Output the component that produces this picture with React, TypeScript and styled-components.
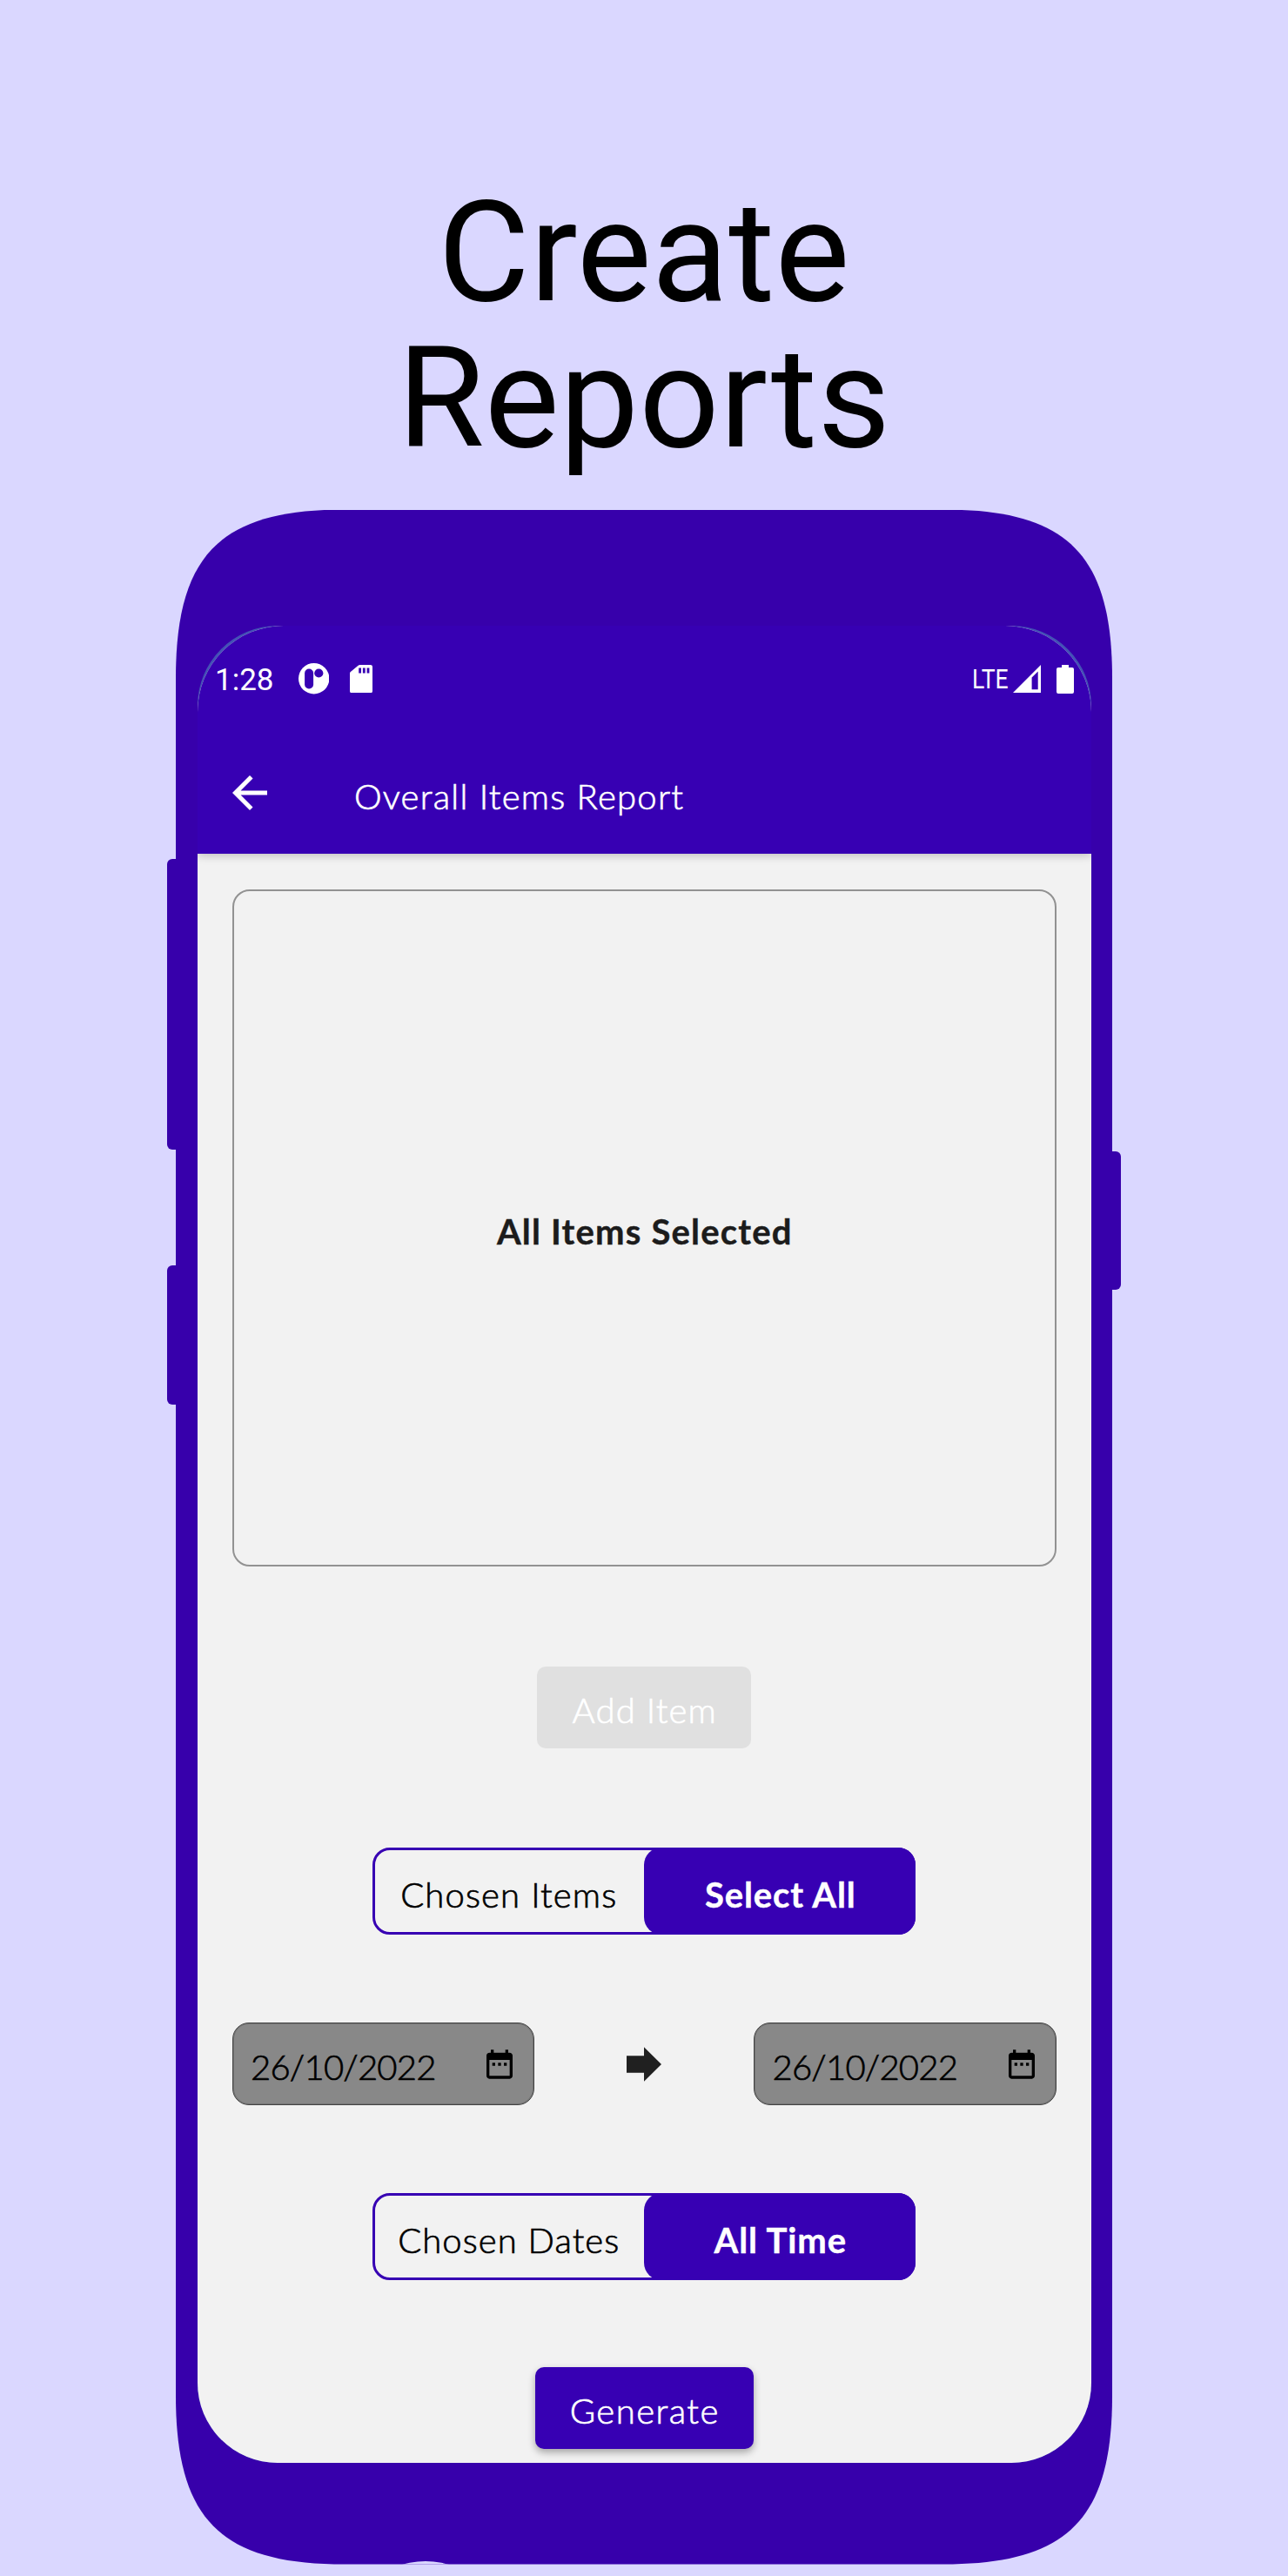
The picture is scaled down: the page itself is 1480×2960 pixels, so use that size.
import React from "react";
import styled, { createGlobalStyle } from "styled-components";

const PRIMARY = "#3700b3";
const BEZEL = "#3700ab";
const LAVENDER = "#dad7ff";
const SURFACE = "#f2f2f2";

const GlobalStyle = createGlobalStyle`
  *, *::before, *::after { box-sizing: border-box; }
  body { margin: 0; background: ${LAVENDER}; }
`;

const Page = styled.main`
  display: flex;
  flex-direction: column;
  align-items: center;
  width: 1480px;
  height: 2960px;
  padding-top: 205.5px;
  overflow: hidden;
  background: ${LAVENDER};
`;

const Headline = styled.h1`
  width: 700px;
  height: 380px;
  margin: 0;
  font: 400 162px/168px Roboto, sans-serif;
  letter-spacing: 0.3px;
  text-align: center;
  color: #000;
`;

const Phone = styled.div`
  display: flex;
  width: 1096px;
`;

const Rail = styled.div`
  flex: none;
  width: 10px;
`;

const SideButton = styled.div<{ $side: "left" | "right"; $top: number; $height: number }>`
  width: 10px;
  height: ${(p) => p.$height}px;
  margin-top: ${(p) => p.$top}px;
  background: ${BEZEL};
  border-radius: ${(p) => (p.$side === "left" ? "6px 0 0 6px" : "0 6px 6px 0")};
`;

const Body = styled.div`
  position: relative;
  flex: none;
  width: 1076px;
  height: 2361px;
  padding: 133.5px 24.5px 0;
  background: ${BEZEL};
  clip-path: path(
    "M0 194 C0 51.4 51.4 0 194 0 H882 C1024.6 0 1076 51.4 1076 194 V2167 C1076 2309.6 1024.6 2361 882 2361 H194 C51.4 2361 0 2309.6 0 2167 Z"
  );
`;

const Notch = styled.div`
  position: absolute;
  left: 194px;
  top: 2357.6px;
  width: 186px;
  height: 186px;
  border-radius: 50%;
  background: ${LAVENDER};
`;

const Screen = styled.div`
  width: 1027px;
  height: 2110.5px;
  overflow: hidden;
  border-radius: 92px;
  background: #4352b5;
`;

const AppView = styled.div`
  display: flex;
  flex-direction: column;
  height: 100%;
  overflow: hidden;
  border-radius: 99px 99px 0 0;
  background: ${SURFACE};
`;

const Header = styled.header`
  position: relative;
  flex: none;
  height: 262px;
  background: ${PRIMARY};
  color: #fff;
  box-shadow: 0 2px 10px rgba(0, 0, 0, 0.22);
`;

const StatusBar = styled.div`
  display: flex;
  align-items: center;
  height: 122px;
  padding: 0 19.5px 0 20.5px;
`;

const Clock = styled.span`
  width: 67.5px;
  margin-right: 28px;
  padding-top: 4px;
  font: 400 35px/40px Roboto, sans-serif;
`;

const Network = styled.span`
  width: 42px;
  margin-left: auto;
  padding-top: 2px;
  font: 400 30.5px/36px Roboto, sans-serif;
  transform: scaleX(0.87);
  transform-origin: left;
`;

const Glyph = styled.svg<{ $ml?: number }>`
  display: block;
  flex: none;
  margin-left: ${(p) => p.$ml ?? 0}px;
`;

const Toolbar = styled.div`
  display: flex;
  align-items: center;
  height: 140px;
  padding-left: 30.5px;
`;

const Label = styled.span<{ $track: number; $drop?: number; $bold?: boolean }>`
  display: block;
  padding-top: ${(p) => p.$drop ?? 7}px;
  padding-left: 1.5px;
  font: ${(p) => (p.$bold ? 700 : 300)} 40px/48px Lato, sans-serif;
  letter-spacing: ${(p) => p.$track}px;
  -webkit-text-stroke: ${(p) => (p.$bold ? 0.4 : 0.7)}px currentColor;
  white-space: nowrap;
`;

const Title = styled(Label)`
  margin-left: 88.5px;
`;

const Content = styled.section`
  display: flex;
  flex: 1;
  flex-direction: column;
  align-items: center;
  padding: 40.5px 40px 0;
`;

const Panel = styled.div`
  display: flex;
  align-items: center;
  justify-content: center;
  width: 947px;
  height: 778px;
  border: 2px solid #929292;
  border-radius: 20px;
  color: #1c1c1c;
`;

const Button = styled.button<{ $width: number; $top: number; $off?: boolean }>`
  display: flex;
  align-items: center;
  justify-content: center;
  width: ${(p) => p.$width}px;
  height: 94.3px;
  margin-top: ${(p) => p.$top}px;
  padding: 0;
  border: 0;
  border-radius: 10px;
  background: ${(p) => (p.$off ? "#e0e0e0" : PRIMARY)};
  color: #fff;
  box-shadow: ${(p) => (p.$off ? "none" : "0 4px 8px rgba(0, 0, 0, 0.32)")};
`;

const Toggle = styled.div<{ $top: number }>`
  display: flex;
  width: 624px;
  height: 100px;
  margin-top: ${(p) => p.$top}px;
  border: 3px solid ${PRIMARY};
  border-radius: 20px;
`;

const Option = styled.div<{ $active?: boolean }>`
  display: flex;
  align-items: center;
  justify-content: center;
  width: 312px;
  margin: -3px;
  margin-right: ${(p) => (p.$active ? -3 : 3)}px;
  border-radius: 20px;
  background: ${(p) => (p.$active ? PRIMARY : "transparent")};
  color: ${(p) => (p.$active ? "#fff" : "#000")};
`;

const DateRow = styled.div`
  display: flex;
  align-items: center;
  justify-content: space-between;
  width: 947px;
  margin-top: 101px;
`;

const DateField = styled.div`
  display: flex;
  align-items: center;
  justify-content: space-between;
  width: 347.5px;
  height: 94.5px;
  padding: 0 19px 0 19px;
  border: 1px solid #444;
  border-radius: 19px;
  background: #888;
  color: #000;
  box-shadow: inset 0 0 0 1px rgba(0, 0, 0, 0.15);
`;

const CalendarIcon = () => (
  <Glyph width="40" height="40" viewBox="0 0 24 24" fill="#000">
    <path d="M9 11H7v2h2v-2zm4 0h-2v2h2v-2zm4 0h-2v2h2v-2zm2-7h-1V2h-2v2H8V2H6v2H5c-1.11 0-1.99.9-1.99 2L3 20c0 1.1.89 2 2 2h14c1.1 0 2-.9 2-2V6c0-1.1-.9-2-2-2zm0 16H5V9h14v11z" />
  </Glyph>
);

const DateInput = ({ value }: { value: string }) => (
  <DateField>
    <Label $track={-0.77}>{value}</Label>
    <CalendarIcon />
  </DateField>
);

type ToggleProps = { top: number; left: string; leftTrack: number; right: string; rightTrack: number };

const Switcher = ({ top, left, leftTrack, right, rightTrack }: ToggleProps) => (
  <Toggle $top={top}>
    <Option>
      <Label $track={leftTrack}>{left}</Label>
    </Option>
    <Option $active>
      <Label $bold $track={rightTrack}>{right}</Label>
    </Option>
  </Toggle>
);

export default function App() {
  return (
    <>
      <GlobalStyle />
      <Page>
        <Headline>
          Create
          <br />
          Reports
        </Headline>
        <Phone>
          <Rail>
            <SideButton $side="left" $top={401.5} $height={334} />
            <SideButton $side="left" $top={133.2} $height={159.5} />
          </Rail>
          <Body>
            <Screen>
              <AppView>
                <Header>
                  <StatusBar>
                    <Clock>1:28</Clock>
                    <Glyph width="35.4" height="35.4" viewBox="0 0 35.4 35.4">
                      <circle cx="17.7" cy="17.7" r="17.7" fill="#fff" />
                      <rect x="7.1" y="6.5" width="10" height="23" rx="5" fill={PRIMARY} />
                      <circle cx="23.3" cy="11.5" r="5.1" fill={PRIMARY} />
                    </Glyph>
                    <Glyph $ml={24.2} width="26" height="32.4" viewBox="0 0 26 32.4">
                      <path d="M11.5 0H23.5Q26 0 26 2.5V29.9Q26 32.4 23.5 32.4H2.5Q0 32.4 0 29.9V9.6Q0 8.7 .8 8L9.6 .8Q10.5 0 11.5 0Z" fill="#fff" />
                      <path d="M10.2 3.6h2.8v6h-2.8zM14.9 3.6h2.8v6h-2.8zM19.6 3.6h2.8v6h-2.8z" fill={PRIMARY} />
                    </Glyph>
                    <Network>LTE</Network>
                    <Glyph $ml={5.5} width="32" height="32" viewBox="0 0 32 32" fill="#fff" fillRule="evenodd">
                      <path d="M32 0V32H0ZM21.6 14.6V28.2H28.7V7.6Z" />
                    </Glyph>
                    <Glyph $ml={17.7} width="20" height="33" viewBox="0 0 20 33" fill="#fff">
                      <path d="M6 0H14V3H18Q20 3 20 5V31Q20 33 18 33H2Q0 33 0 31V5Q0 3 2 3H6Z" />
                    </Glyph>
                  </StatusBar>
                  <Toolbar>
                    <Glyph width="60" height="60" viewBox="0 0 24 24" fill="#fff">
                      <path d="M20 11H7.83l5.59-5.59L12 4l-8 8 8 8 1.41-1.41L7.83 13H20v-2z" />
                    </Glyph>
                    <Title $track={1.26} $drop={8}>Overall Items Report</Title>
                  </Toolbar>
                </Header>
                <Content>
                  <Panel>
                    <Label $bold $track={1.2} $drop={9}>All Items Selected</Label>
                  </Panel>
                  <Button $width={246} $top={115} $off>
                    <Label $track={1.14} $drop={6}>Add Item</Label>
                  </Button>
                  <Switcher top={114.6} left="Chosen Items" leftTrack={1.13} right="Select All" rightTrack={0.9} />
                  <DateRow>
                    <DateInput value="26/10/2022" />
                    <Glyph width="40" height="40" viewBox="0 0 40 40" fill="#202020">
                      <path d="M0 10.3H20V.3L40 20 20 39.7V29.7H0Z" />
                    </Glyph>
                    <DateInput value="26/10/2022" />
                  </DateRow>
                  <Switcher top={101.3} left="Chosen Dates" leftTrack={1.04} right="All Time" rightTrack={0.95} />
                  <Button $width={251} $top={99.5}>
                    <Label $track={1.49}>Generate</Label>
                  </Button>
                </Content>
              </AppView>
            </Screen>
            <Notch />
          </Body>
          <Rail>
            <SideButton $side="right" $top={737.2} $height={159.4} />
          </Rail>
        </Phone>
      </Page>
    </>
  );
}
